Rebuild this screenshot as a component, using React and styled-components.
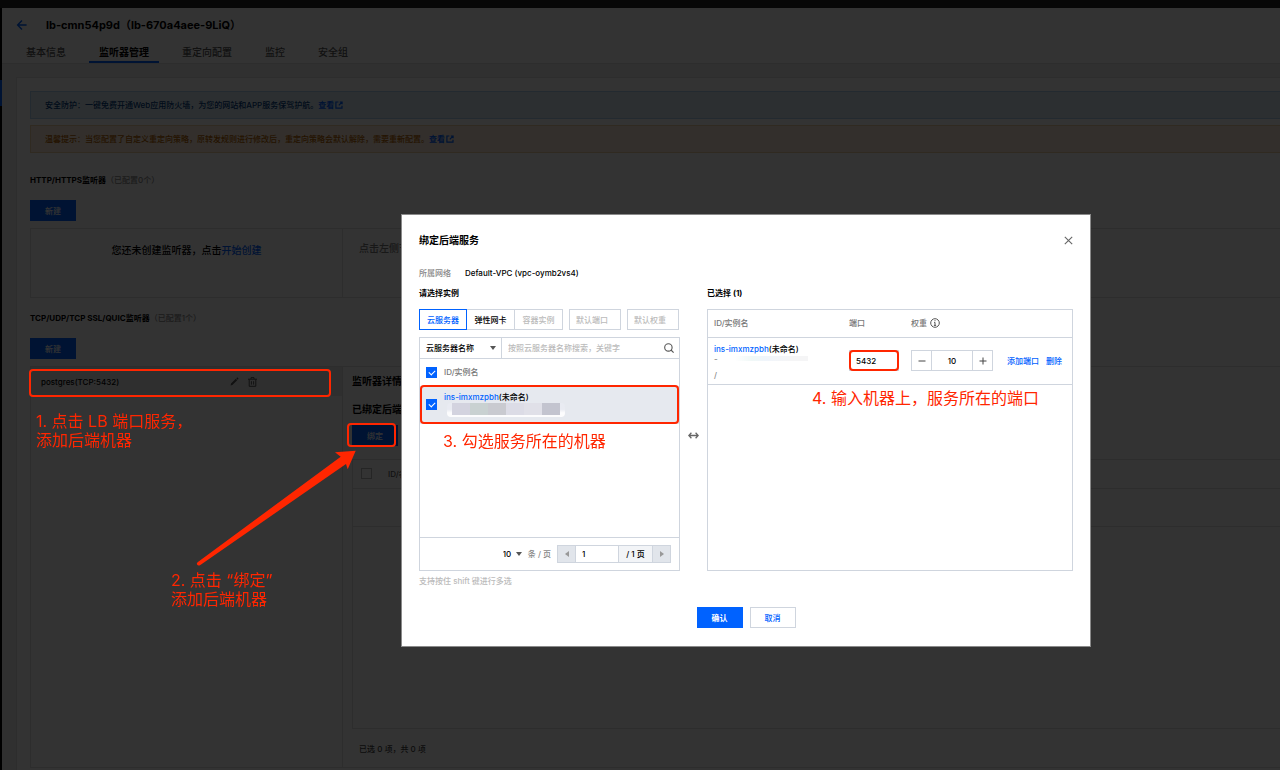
import React, { useState } from 'react'
import styled, { createGlobalStyle, css } from 'styled-components'

const GlobalStyle = createGlobalStyle`
  * {
    box-sizing: border-box;
  }

  body {
    margin: 0;
    background: #333;
    color: #000;
    font-family: Inter, "Noto Sans CJK SC", sans-serif;
    font-size: 8px;
    font-weight: 500;
    line-height: 12px;
  }

  button, input, select {
    margin: 0;
    font: inherit;
    color: inherit;
    border-radius: 0;
  }

  button {
    cursor: pointer;
  }

  a {
    color: #0062ff;
    text-decoration: none;
  }

  h1, h2, h3, p {
    margin: 0;
    font-size: inherit;
  }
`

/* ---------- console page ---------- */

const Page = styled.div`
  display: flex;
  flex-direction: column;
  min-height: 100vh;
  background: #fff;
`

const TopBar = styled.div`
  height: 8px;
  background: #262626;
`

const Body = styled.div`
  flex: 1;
  display: flex;
`

const SideEdge = styled.div`
  width: 2px;
  padding-top: 72px;
  background: #000;

  &::before {
    content: "";
    display: block;
    height: 26px;
    background: #0062ff;
  }
`

const Main = styled.main`
  flex: 1;
  min-width: 0;
  display: flex;
  flex-direction: column;
  background: #f0f0f0;
`

const Header = styled.header`
  height: 56px;
  padding: 8px 0 0 14px;
  background: #fff;
  border-bottom: 1px solid #e2e2e2;
`

const TitleRow = styled.div`
  display: flex;
  align-items: center;
  gap: 18px;
  height: 18px;
  font-size: 11px;
`

const IconButton = styled.button`
  display: flex;
  padding: 0;
  border: 0;
  background: none;
  color: ${props => props.color || '#555'};
`

const Tabs = styled.nav`
  display: flex;
  gap: 13px;
  margin-top: 8px;
`

const Tab = styled.a`
  height: 21px;
  padding: 4px 10px 0;
  font-size: 10px;
  color: ${props => (props.$active ? '#000' : '#555')};
  font-weight: ${props => (props.$active ? 700 : 500)};
  border-bottom: 2px solid ${props => (props.$active ? '#0062ff' : 'transparent')};
`

const Card = styled.section`
  flex: 1;
  display: flex;
  flex-direction: column;
  margin: 13px 0 0 14px;
  padding: 13px 0 2px 13px;
  background: #fff;
  border: solid #e2e2e2;
  border-width: 1px 0 0 1px;
`

const alertTones = {
  info: css`
    color: #003b80;
    background: #dcebf5;
    border-color: #b0cff0;
  `,
  warning: css`
    color: #b36200;
    background: #fdebd9;
    border-color: #f0d2a4;
  `,
}

const Alert = styled.div`
  display: flex;
  align-items: center;
  height: 28px;
  margin-bottom: 6px;
  padding-left: 14px;
  border: 1px solid;
  border-right: 0;
  ${props => alertTones[props.$tone]}

  a {
    display: flex;
    align-items: center;
    gap: 1px;
    font-weight: 700;
  }
`

const SectionTitle = styled.h3`
  margin-top: ${props => props.$top};
  font-weight: 700;

  span {
    font-weight: 500;
    color: #888;
  }
`

const ButtonRow = styled.div`
  display: flex;
  justify-content: ${props => (props.$center ? 'center' : 'flex-start')};
  gap: 7px;
  margin-top: ${props => props.$top || 0};
`

const Button = styled.button`
  width: 46px;
  height: 21px;
  padding: 0;
  font-weight: ${props => (props.$strong ? 700 : 500)};
  color: ${props => (props.$primary ? '#fff' : '#0062ff')};
  background: ${props => (props.$primary ? '#0062ff' : '#fff')};
  border: 1px solid ${props => (props.$primary ? '#0062ff' : '#cfd5de')};
`

const Split = styled.div`
  display: flex;
  flex: ${props => (props.$grow ? 1 : 'none')};
  min-height: 70px;
  margin-top: 7px;
  border: solid #e2e2e2;
  border-width: 1px 0 1px 1px;
`

const Side = styled.div`
  flex: none;
  width: 312px;
  border-right: 1px solid #e2e2e2;
`

const Empty = styled.p`
  padding-top: 15px;
  text-align: center;
  font-size: 10px;
`

const Tip = styled.p`
  padding: 13px 16px;
  font-size: 10px;
  color: #777;
`

const Listener = styled.div`
  display: flex;
  align-items: center;
  height: 29px;
  padding-left: 10px;
  background: #ececec;

  span {
    width: 189px;
  }
`

const Detail = styled.div`
  flex: 1;
  min-width: 0;
  display: flex;
  flex-direction: column;
  padding: 8px 0 0 9px;

  h3 {
    margin-bottom: 16px;
    font-size: 10px;
  }

  h3 + h3 {
    margin-bottom: 10px;
  }
`

const BoundBox = styled.div`
  flex: 1;
  margin-top: 13px;
  border: solid #e2e2e2;
  border-width: 1px 0 1px 1px;
`

const BoundTable = styled.table`
  width: 100%;
  border-collapse: collapse;
  color: #555;

  th {
    height: 28px;
    padding: 0 8px;
    text-align: left;
    font-weight: 500;
    border-bottom: 1px solid #e2e2e2;
  }

  th:first-child {
    width: 27px;
  }

  td {
    height: 38px;
    border-bottom: 1px solid #e2e2e2;
  }
`

const Summary = styled.p`
  padding: 14px 7px 12px;
  color: #444;
`

/* ---------- dialog ---------- */

const Backdrop = styled.div`
  position: fixed;
  inset: 0;
  display: flex;
  justify-content: center;
  align-items: flex-start;
  padding: 214px 0 0 212px;
  background: rgba(0, 0, 0, 0.8);
`

const Dialog = styled.div`
  width: 690px;
  padding: 18px 17px;
  background: #fff;
  border: 1px solid #8a8a8a;
`

const DialogHead = styled.div`
  display: flex;
  align-items: center;
  justify-content: space-between;
  height: 14px;

  h2 {
    font-size: 10px;
  }
`

const Network = styled.dl`
  display: flex;
  gap: 14px;
  margin: 20px 0 8px;

  dt {
    color: #888;
  }

  dd {
    margin: 0;
  }
`

const Transfer = styled.div`
  display: grid;
  grid-template-columns: 261px 27px 1fr;

  h3 {
    margin-bottom: 10px;
  }
`

const Column = styled.div`
  display: flex;
  flex-direction: column;
`

const Options = styled.div`
  display: flex;
  gap: 6px;
  margin-bottom: 7px;
`

const Segments = styled.div`
  display: flex;
`

const Segment = styled.button`
  width: 48px;
  height: 21px;
  padding: 0;
  color: ${props => (props.$active ? '#0062ff' : '#000')};
  background: #fff;
  border: 1px solid ${props => (props.$active ? '#0062ff' : '#cfd5de')};
  border-left-width: ${props => (props.$active ? '1px' : 0)};

  &:disabled {
    color: #bbb;
  }
`

const TextBox = styled.input`
  width: ${props => props.$width};
  height: 21px;
  padding: 0 6px;
  border: 1px solid #cfd5de;
  background: #fff;
  outline: none;
  text-align: ${props => props.$align || 'left'};

  &::placeholder {
    color: #bbb;
  }
`

const Panel = styled.div`
  display: flex;
  flex-direction: column;
  height: ${props => props.$height};
  border: 1px solid #cfd5de;
`

const SearchBar = styled.div`
  display: flex;
  align-items: center;
  height: 21px;
  padding-right: 5px;
  border-bottom: 1px solid #cfd5de;

  input {
    flex: 1;
    min-width: 0;
    height: 20px;
    border: 0;
  }
`

const Dropdown = styled.span`
  display: flex;
  align-items: center;
  width: ${props => props.$width};
  height: 20px;
  padding-right: ${props => (props.$divided ? '5px' : 0)};
  border-right: ${props => (props.$divided ? '1px solid #cfd5de' : 0)};

  select {
    flex: 1;
    min-width: 0;
    padding: 0 0 0 ${props => (props.$divided ? '6px' : 0)};
    appearance: none;
    border: 0;
    background: none;
    outline: none;
  }
`

const Checkbox = styled.input.attrs({ type: 'checkbox' })`
  appearance: none;
  position: relative;
  display: block;
  width: 11px;
  height: 11px;
  background: #fff;
  border: 1px solid #bbb;

  &:checked {
    background: #0062ff;
    border-color: #0062ff;
  }

  &:checked::after {
    content: "";
    position: absolute;
    left: 3px;
    top: 1px;
    width: 3px;
    height: 5px;
    border: solid #fff;
    border-width: 0 1px 1px 0;
    transform: rotate(45deg);
  }
`

const InstanceTable = styled.table`
  width: 100%;
  border-collapse: collapse;

  th {
    height: 27px;
    padding: 0;
    text-align: left;
    font-weight: 500;
    color: #777;
    border-bottom: 1px solid #dfe3e9;
  }

  td {
    height: 38px;
    padding: 0 0 2px;
    background: #e6e9ef;
  }

  th:first-child,
  td:first-child {
    width: 24px;
    padding-left: 6px;
  }
`

const SelectedTable = styled.table`
  width: 100%;
  table-layout: fixed;
  border-collapse: collapse;

  th {
    height: 27px;
    padding: 0;
    text-align: left;
    font-weight: 500;
    color: #777;
    border-bottom: 1px solid #cfd5de;
  }

  td {
    height: 47px;
    padding: 0;
    border-bottom: 1px solid #cfd5de;
  }

  th:first-child,
  td:first-child {
    padding-left: 6px;
  }
`

const Inline = styled.div`
  display: flex;
  align-items: center;
  gap: ${props => props.$gap || '3px'};
`

const InstanceName = styled.div`
  color: #000;
`

// address line is censored, only blurry blocks are left
const Mosaic = styled.div`
  display: flex;
  width: 118px;
  height: 14px;
  margin-left: 3px;
  padding-left: 5px;
  background: linear-gradient(#e9ebf2 45%, #fcfcfd 70%);
  border-radius: 4px;
  overflow: hidden;

  i {
    width: 18px;
    height: 12px;
  }
`

const Faded = styled.div`
  display: flex;
  flex-direction: column;
  justify-content: space-between;
  width: 94px;
  height: 24px;
  color: #888;
  line-height: 8px;
  background: linear-gradient(90deg, #fff 22%, #f0f8f7 40%, #f0f5fb 55%, #f5f5f6 80%) no-repeat 0 1px / 94px 5px;
`

const Marked = styled.div`
  position: relative;

  &::after {
    content: "";
    position: absolute;
    inset: ${props => props.$inset};
    border: 2px solid #ff2600;
    border-radius: 4px;
    pointer-events: none;
  }
`

const Stepper = styled.div`
  display: flex;

  input {
    margin: 0 -1px;
  }

  button {
    display: flex;
    align-items: center;
    justify-content: center;
    width: 21px;
    height: 21px;
    padding: 0;
    background: #fff;
    border: 1px solid #cfd5de;
  }
`

const Pager = styled.div`
  display: flex;
  align-items: center;
  justify-content: flex-end;
  gap: 6px;
  height: 33px;
  margin-top: auto;
  padding-right: 8px;
  color: #888;
  border-top: 1px solid #cfd5de;

  select {
    color: #000;
  }
`

const PageJump = styled.div`
  display: flex;
  height: 18px;
  color: #000;
  border: 1px solid #cfd5de;

  button {
    display: flex;
    align-items: center;
    justify-content: center;
    width: 17px;
    padding: 0;
    border: 0;
    color: #999;
    background: #e1e5eb;
  }

  input {
    height: 16px;
    border-width: 0 1px;
  }

  span {
    width: 34px;
    line-height: 16px;
    text-align: center;
    background: #f2f4f7;
    border-right: 1px solid #cfd5de;
  }
`

const ShiftHint = styled.p`
  margin-top: 4px;
  color: #bbb;
`

const Exchange = styled.div`
  display: flex;
  justify-content: center;
  padding-top: 145px;
`

/* ---------- tutorial notes over the page ---------- */

const Note = styled.div`
  position: absolute;
  left: ${props => props.$x}px;
  top: ${props => props.$y}px;
  font-size: 16px;
  font-weight: 400;
  line-height: 19px;
  white-space: nowrap;
  color: #ff2600;
`

const Frame = styled.div`
  position: absolute;
  left: ${props => props.$x}px;
  top: ${props => props.$y}px;
  width: ${props => props.$w}px;
  height: ${props => props.$h}px;
  border: 2px solid #ff2600;
  border-radius: 4px;
`

const Arrow = styled.svg`
  position: absolute;
  left: 190px;
  top: 445px;
`

const BackIcon = () => (
  <svg width="12" height="12" viewBox="0 0 12 12" fill="none" stroke="currentColor" strokeWidth="1.4">
    <path d="M10.6 6H2M6 1.6 1.6 6 6 10.4" />
  </svg>
)

const ExternalIcon = () => (
  <svg width="8" height="8" viewBox="0 0 8 8" fill="none" stroke="currentColor" strokeWidth="1.2">
    <path d="M3.4 1H.9v6.2H7V4.8M4.8 1h2.3v2.3M7 1 3.8 4.4" />
  </svg>
)

const PencilIcon = () => (
  <svg width="9" height="9" viewBox="0 0 9 9" fill="currentColor">
    <path d="M.6 8.4 1 6.6 5.8 1.8 7.2 3.2 2.4 8zM6.3 1.3 7 .6Q7.3.3 7.6.6L8.4 1.4Q8.7 1.7 8.4 2L7.7 2.7z" />
  </svg>
)

const TrashIcon = () => (
  <svg width="9" height="10" viewBox="0 0 9 10" fill="none" stroke="currentColor">
    <path d="M0 2.2h9M3 2V.6h3V2M1.2 2.4v6.9h6.6V2.4M3.4 4.2v3.4M5.6 4.2v3.4" />
  </svg>
)

const CloseIcon = () => (
  <svg width="9" height="9" viewBox="0 0 9 9" fill="none" stroke="#666" strokeWidth="1.1">
    <path d="m.8.8 7.4 7.4M8.2.8.8 8.2" />
  </svg>
)

const SearchIcon = () => (
  <svg width="10" height="10" viewBox="0 0 10 10" fill="none" stroke="#555" strokeWidth="1.1">
    <circle cx="4.4" cy="4.4" r="3.7" />
    <path d="m7 7 2.6 2.6" />
  </svg>
)

const InfoIcon = () => (
  <svg width="10" height="10" viewBox="0 0 10 10" fill="none" stroke="#555">
    <circle cx="5" cy="5" r="4.3" />
    <path d="M5 2.2v1M4.1 4.4H5v3M3.9 7.4h2.2" />
  </svg>
)

const Caret = () => (
  <svg width="6" height="4" viewBox="0 0 6 4" fill="#555">
    <path d="M0 0h6L3 4z" />
  </svg>
)

const Triangle = ({ flip }) => (
  <svg width="4" height="6" viewBox="0 0 4 6" fill="currentColor">
    <path d={flip ? 'M0 0v6l4-3z' : 'M4 0v6L0 3z'} />
  </svg>
)

const ExchangeIcon = () => (
  <svg width="11" height="7" viewBox="0 0 11 7" fill="none" stroke="#666" strokeWidth="1.3">
    <path d="M1 3.5h9M3.4.8.8 3.5l2.6 2.7M7.6.8l2.6 2.7-2.6 2.7" />
  </svg>
)

const SignIcon = ({ plus }) => (
  <svg width="8" height="8" viewBox="0 0 8 8" stroke="#444">
    <path d={plus ? 'M.5 4h7M4 .5v7' : 'M.5 4h7'} />
  </svg>
)

const tabs = ['基本信息', '监听器管理', '重定向配置', '监控', '安全组']
const blocks = ['#d3d3df', '#c9d1d1', '#c9cad0', '#dcdce6', '#e0e0e8', '#c3c4cf']

function BindDialog() {
  const [all, setAll] = useState(true)
  const [port, setPort] = useState('5432')
  const [weight, setWeight] = useState(10)

  return (
    <Dialog role="dialog" aria-labelledby="bind-title">
      <DialogHead>
        <h2 id="bind-title">绑定后端服务</h2>
        <IconButton aria-label="关闭"><CloseIcon /></IconButton>
      </DialogHead>
      <Network>
        <dt>所属网络</dt>
        <dd>Default-VPC (vpc-oymb2vs4)</dd>
      </Network>

      <Transfer>
        <Column>
          <h3>请选择实例</h3>
          <Options>
            <Segments>
              <Segment $active>云服务器</Segment>
              <Segment>弹性网卡</Segment>
              <Segment disabled>容器实例</Segment>
            </Segments>
            <TextBox $width="52px" placeholder="默认端口" aria-label="默认端口" />
            <TextBox $width="52px" placeholder="默认权重" aria-label="默认权重" />
          </Options>
          <Panel $height="234px">
            <SearchBar>
              <Dropdown $width="82px" $divided>
                <select aria-label="搜索字段"><option>云服务器名称</option></select>
                <Caret />
              </Dropdown>
              <TextBox placeholder="按照云服务器名称搜索，关键字" aria-label="搜索" />
              <SearchIcon />
            </SearchBar>
            <Marked $inset="26px 0 0 0">
              <InstanceTable>
                <thead>
                  <tr>
                    <th><Checkbox aria-label="全选" checked={all} onChange={() => setAll(!all)} /></th>
                    <th>ID/实例名</th>
                  </tr>
                </thead>
                <tbody>
                  <tr>
                    <td><Checkbox aria-label="ins-imxmzpbh" checked={all} onChange={() => setAll(!all)} /></td>
                    <td>
                      <InstanceName><a href="#ins">ins-imxmzpbh</a>(未命名)</InstanceName>
                      <Mosaic>{blocks.map(c => <i key={c} style={{ background: c }} />)}</Mosaic>
                    </td>
                  </tr>
                </tbody>
              </InstanceTable>
            </Marked>
            <Pager>
              <Dropdown $width="19px">
                <select aria-label="每页条数"><option>10</option></select>
                <Caret />
              </Dropdown>
              条 / 页
              <PageJump>
                <button aria-label="上一页"><Triangle /></button>
                <TextBox $width="44px" defaultValue="1" aria-label="页码" />
                <span>/ 1 页</span>
                <button aria-label="下一页"><Triangle flip /></button>
              </PageJump>
            </Pager>
          </Panel>
          <ShiftHint>支持按住 shift 键进行多选</ShiftHint>
        </Column>

        <Exchange><ExchangeIcon /></Exchange>

        <Column>
          <h3>已选择 (1)</h3>
          <Panel $height="262px">
            <SelectedTable>
              <colgroup>
                <col width="141" />
                <col width="62" />
                <col width="96" />
                <col />
              </colgroup>
              <thead>
                <tr>
                  <th>ID/实例名</th>
                  <th>端口</th>
                  <th><Inline>权重 <InfoIcon /></Inline></th>
                  <th />
                </tr>
              </thead>
              <tbody>
                <tr>
                  <td>
                    <InstanceName><a href="#ins">ins-imxmzpbh</a>(未命名)</InstanceName>
                    <Faded><span>-</span><span>/</span></Faded>
                  </td>
                  <td>
                    <Marked $inset="0 12px 0 0">
                      <TextBox
                        $width="50px"
                        aria-label="端口"
                        value={port}
                        onChange={e => setPort(e.target.value)}
                      />
                    </Marked>
                  </td>
                  <td>
                    <Stepper>
                      <button aria-label="减" onClick={() => setWeight(weight - 1)}><SignIcon /></button>
                      <TextBox
                        $width="42px"
                        $align="center"
                        aria-label="权重"
                        value={weight}
                        onChange={e => setWeight(Number(e.target.value))}
                      />
                      <button aria-label="加" onClick={() => setWeight(weight + 1)}><SignIcon plus /></button>
                    </Stepper>
                  </td>
                  <td>
                    <Inline $gap="7px">
                      <a href="#add">添加端口</a>
                      <a href="#delete">删除</a>
                    </Inline>
                  </td>
                </tr>
              </tbody>
            </SelectedTable>
          </Panel>
        </Column>
      </Transfer>

      <ButtonRow $center $top="20px">
        <Button $primary $strong>确认</Button>
        <Button>取消</Button>
      </ButtonRow>
    </Dialog>
  )
}

export default function App() {
  return (
    <>
      <GlobalStyle />
      <Page lang="zh-CN">
        <TopBar />
        <Body>
          <SideEdge />
          <Main>
            <Header>
              <TitleRow>
                <IconButton color="#0062ff" aria-label="返回"><BackIcon /></IconButton>
                <h1>lb-cmn54p9d（lb-670a4aee-9LiQ）</h1>
              </TitleRow>
              <Tabs>
                {tabs.map((t, i) => <Tab key={t} href={`#tab${i}`} $active={i === 1}>{t}</Tab>)}
              </Tabs>
            </Header>
            <Card>
              <Alert $tone="info">
                安全防护：一键免费开通Web应用防火墙，为您的网站和APP服务保驾护航。
                <a href="#waf">查看<ExternalIcon /></a>
              </Alert>
              <Alert $tone="warning">
                温馨提示：当您配置了自定义重定向策略，原转发规则进行修改后，重定向策略会默认解除，需要重新配置。
                <a href="#redirect">查看<ExternalIcon /></a>
              </Alert>

              <SectionTitle $top="15px">HTTP/HTTPS监听器<span>（已配置0个）</span></SectionTitle>
              <ButtonRow $top="14px"><Button $primary>新建</Button></ButtonRow>
              <Split>
                <Side>
                  <Empty>您还未创建监听器，点击<a href="#create">开始创建</a></Empty>
                </Side>
                <Tip>点击左侧节</Tip>
              </Split>

              <SectionTitle $top="14px">TCP/UDP/TCP SSL/QUIC监听器<span>（已配置1个）</span></SectionTitle>
              <ButtonRow $top="14px"><Button $primary>新建</Button></ButtonRow>
              <Split $grow>
                <Side>
                  <Listener>
                    <span>postgres(TCP:5432)</span>
                    <Inline $gap="9px">
                      <IconButton aria-label="编辑"><PencilIcon /></IconButton>
                      <IconButton aria-label="删除"><TrashIcon /></IconButton>
                    </Inline>
                  </Listener>
                </Side>
                <Detail>
                  <h3>监听器详情<a href="#expand">展开</a></h3>
                  <h3>已绑定后端服务</h3>
                  <ButtonRow><Button $primary>绑定</Button></ButtonRow>
                  <BoundBox>
                    <BoundTable>
                      <thead>
                        <tr>
                          <th><Checkbox aria-label="全选后端" /></th>
                          <th>ID/名称</th>
                        </tr>
                      </thead>
                      <tbody>
                        <tr><td colSpan="2" /></tr>
                      </tbody>
                    </BoundTable>
                  </BoundBox>
                  <Summary>已选 0 项，共 0 项</Summary>
                </Detail>
              </Split>
            </Card>
          </Main>
        </Body>
      </Page>

      <Backdrop>
        <BindDialog />
        <Frame $x={29} $y={369} $w={302} $h={28} />
        <Note $x={36} $y={412}>1. 点击 LB 端口服务，<br />添加后端机器</Note>
        <Frame $x={347} $y={423} $w={49} $h={24} />
        <Arrow width="170" height="125" viewBox="190 445 170 125">
          <path
            fill="#ff2600"
            d="M355.7 450.7 335 452.3l5.7 4.4L197.6 562.2q-1.4 1.4-.4 2.6t2.8.4L346 464l1.7 5.3z"
          />
        </Arrow>
        <Note $x={171} $y={571}>2. 点击 “绑定”<br />添加后端机器</Note>
        <Note $x={443} $y={432}>3. 勾选服务所在的机器</Note>
        <Note $x={812} $y={389}>4. 输入机器上，服务所在的端口</Note>
      </Backdrop>
    </>
  )
}
